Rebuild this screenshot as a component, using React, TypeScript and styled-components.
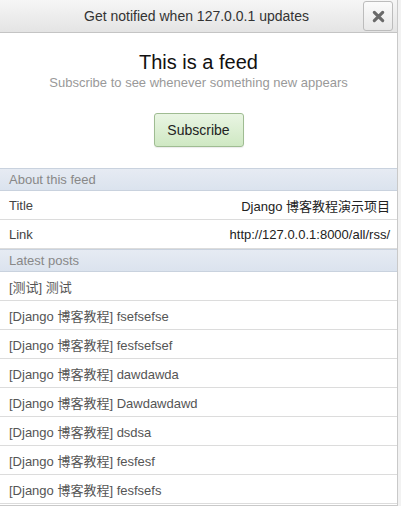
import styled, { createGlobalStyle } from "styled-components";

const GlobalStyle = createGlobalStyle`
  html, body {
    margin: 0;
    padding: 0;
    background: #f2f2f2;
  }
  body {
    font-family: "Liberation Sans", Arial, "Noto Sans CJK SC", sans-serif;
  }
`;

const posts = [
  "[测试] 测试",
  "[Django 博客教程] fsefsefse",
  "[Django 博客教程] fesfsefsef",
  "[Django 博客教程] dawdawda",
  "[Django 博客教程] Dawdawdawd",
  "[Django 博客教程] dsdsa",
  "[Django 博客教程] fesfesf",
  "[Django 博客教程] fesfsefs",
];

function App() {
  return (
    <>
      <GlobalStyle />
      <Panel>
        <TopBar>
          <TopTitle>Get notified when 127.0.0.1 updates</TopTitle>
          <CloseButton aria-label="close">
            <svg width="13" height="13" viewBox="0 0 14 14">
              <path
                d="M2.5 2.5 L11.5 11.5 M11.5 2.5 L2.5 11.5"
                stroke="#6a6a6a"
                strokeWidth="3.4"
                strokeLinecap="round"
              />
            </svg>
          </CloseButton>
        </TopBar>

        <Hero>
          <FeedTitle>This is a feed</FeedTitle>
          <FeedSub>Subscribe to see whenever something new appears</FeedSub>
          <SubscribeButton>Subscribe</SubscribeButton>
        </Hero>

        <SectionHead>About this feed</SectionHead>
        <Row>
          <span>Title</span>
          <Value>Django 博客教程演示项目</Value>
        </Row>
        <Row>
          <span>Link</span>
          <Value>http://127.0.0.1:8000/all/rss/</Value>
        </Row>

        <SectionHead>Latest posts</SectionHead>
        {posts.map((p, i) => (
          <PostRow key={i}>{p}</PostRow>
        ))}
      </Panel>
    </>
  );
}

const Panel = styled.div`
  width: 397px;
  min-height: 505px;
  background: #fff;
  border-right: 1px solid #c9c9c9;
  border-bottom: 1px solid #c9c9c9;
  overflow: hidden;
`;

const TopBar = styled.div`
  height: 33px;
  display: flex;
  align-items: center;
  justify-content: center;
  position: relative;
  background: linear-gradient(#f6f6f6, #e4e4e4);
  border-bottom: 1px solid #c4c4c4;
  box-sizing: border-box;
`;

const TopTitle = styled.div`
  font-size: 14px;
  color: #333;
  padding-right: 4px;
`;

const CloseButton = styled.button`
  position: absolute;
  right: 4px;
  top: 1px;
  width: 30px;
  height: 30px;
  padding: 0;
  display: flex;
  align-items: center;
  justify-content: center;
  border: 1px solid #bcbcbc;
  border-radius: 3px;
  background: linear-gradient(#fbfbfb, #e8e8e8);
`;

const Hero = styled.div`
  display: flex;
  flex-direction: column;
  align-items: center;
  padding-top: 17px;
  padding-bottom: 21px;
`;

const FeedTitle = styled.div`
  font-size: 20px;
  color: #111;
  line-height: 24px;
`;

const FeedSub = styled.div`
  font-size: 13px;
  color: #999;
  line-height: 16px;
  margin-top: 1px;
`;

const SubscribeButton = styled.button`
  margin-top: 22px;
  width: 90px;
  height: 34px;
  font-family: inherit;
  font-size: 14px;
  color: #222;
  border: 1px solid #9fbc92;
  border-radius: 3px;
  background: linear-gradient(#e9f5e3, #cfe8c3);
  box-shadow: 0 1px 1px rgba(0, 0, 0, 0.08);
`;

const SectionHead = styled.div`
  height: 23px;
  box-sizing: border-box;
  display: flex;
  align-items: center;
  padding: 0 9px;
  font-size: 13px;
  color: #888;
  background: linear-gradient(#e6ebf3, #dbe3ee);
  border-top: 1px solid #c9d2de;
  border-bottom: 1px solid #c9d2de;
`;

const Row = styled.div`
  height: 29px;
  box-sizing: border-box;
  display: flex;
  align-items: center;
  justify-content: space-between;
  padding: 0 7px 0 9px;
  font-size: 13px;
  color: #444;
  border-bottom: 1px solid #dcdcdc;
  &:last-of-type {
    border-bottom: none;
  }
`;

const Value = styled.span`
  color: #222;
`;

const PostRow = styled.div`
  height: 29px;
  box-sizing: border-box;
  display: flex;
  align-items: center;
  padding: 0 9px;
  font-size: 13px;
  color: #555;
  border-bottom: 1px solid #dcdcdc;
`;

export default App;
